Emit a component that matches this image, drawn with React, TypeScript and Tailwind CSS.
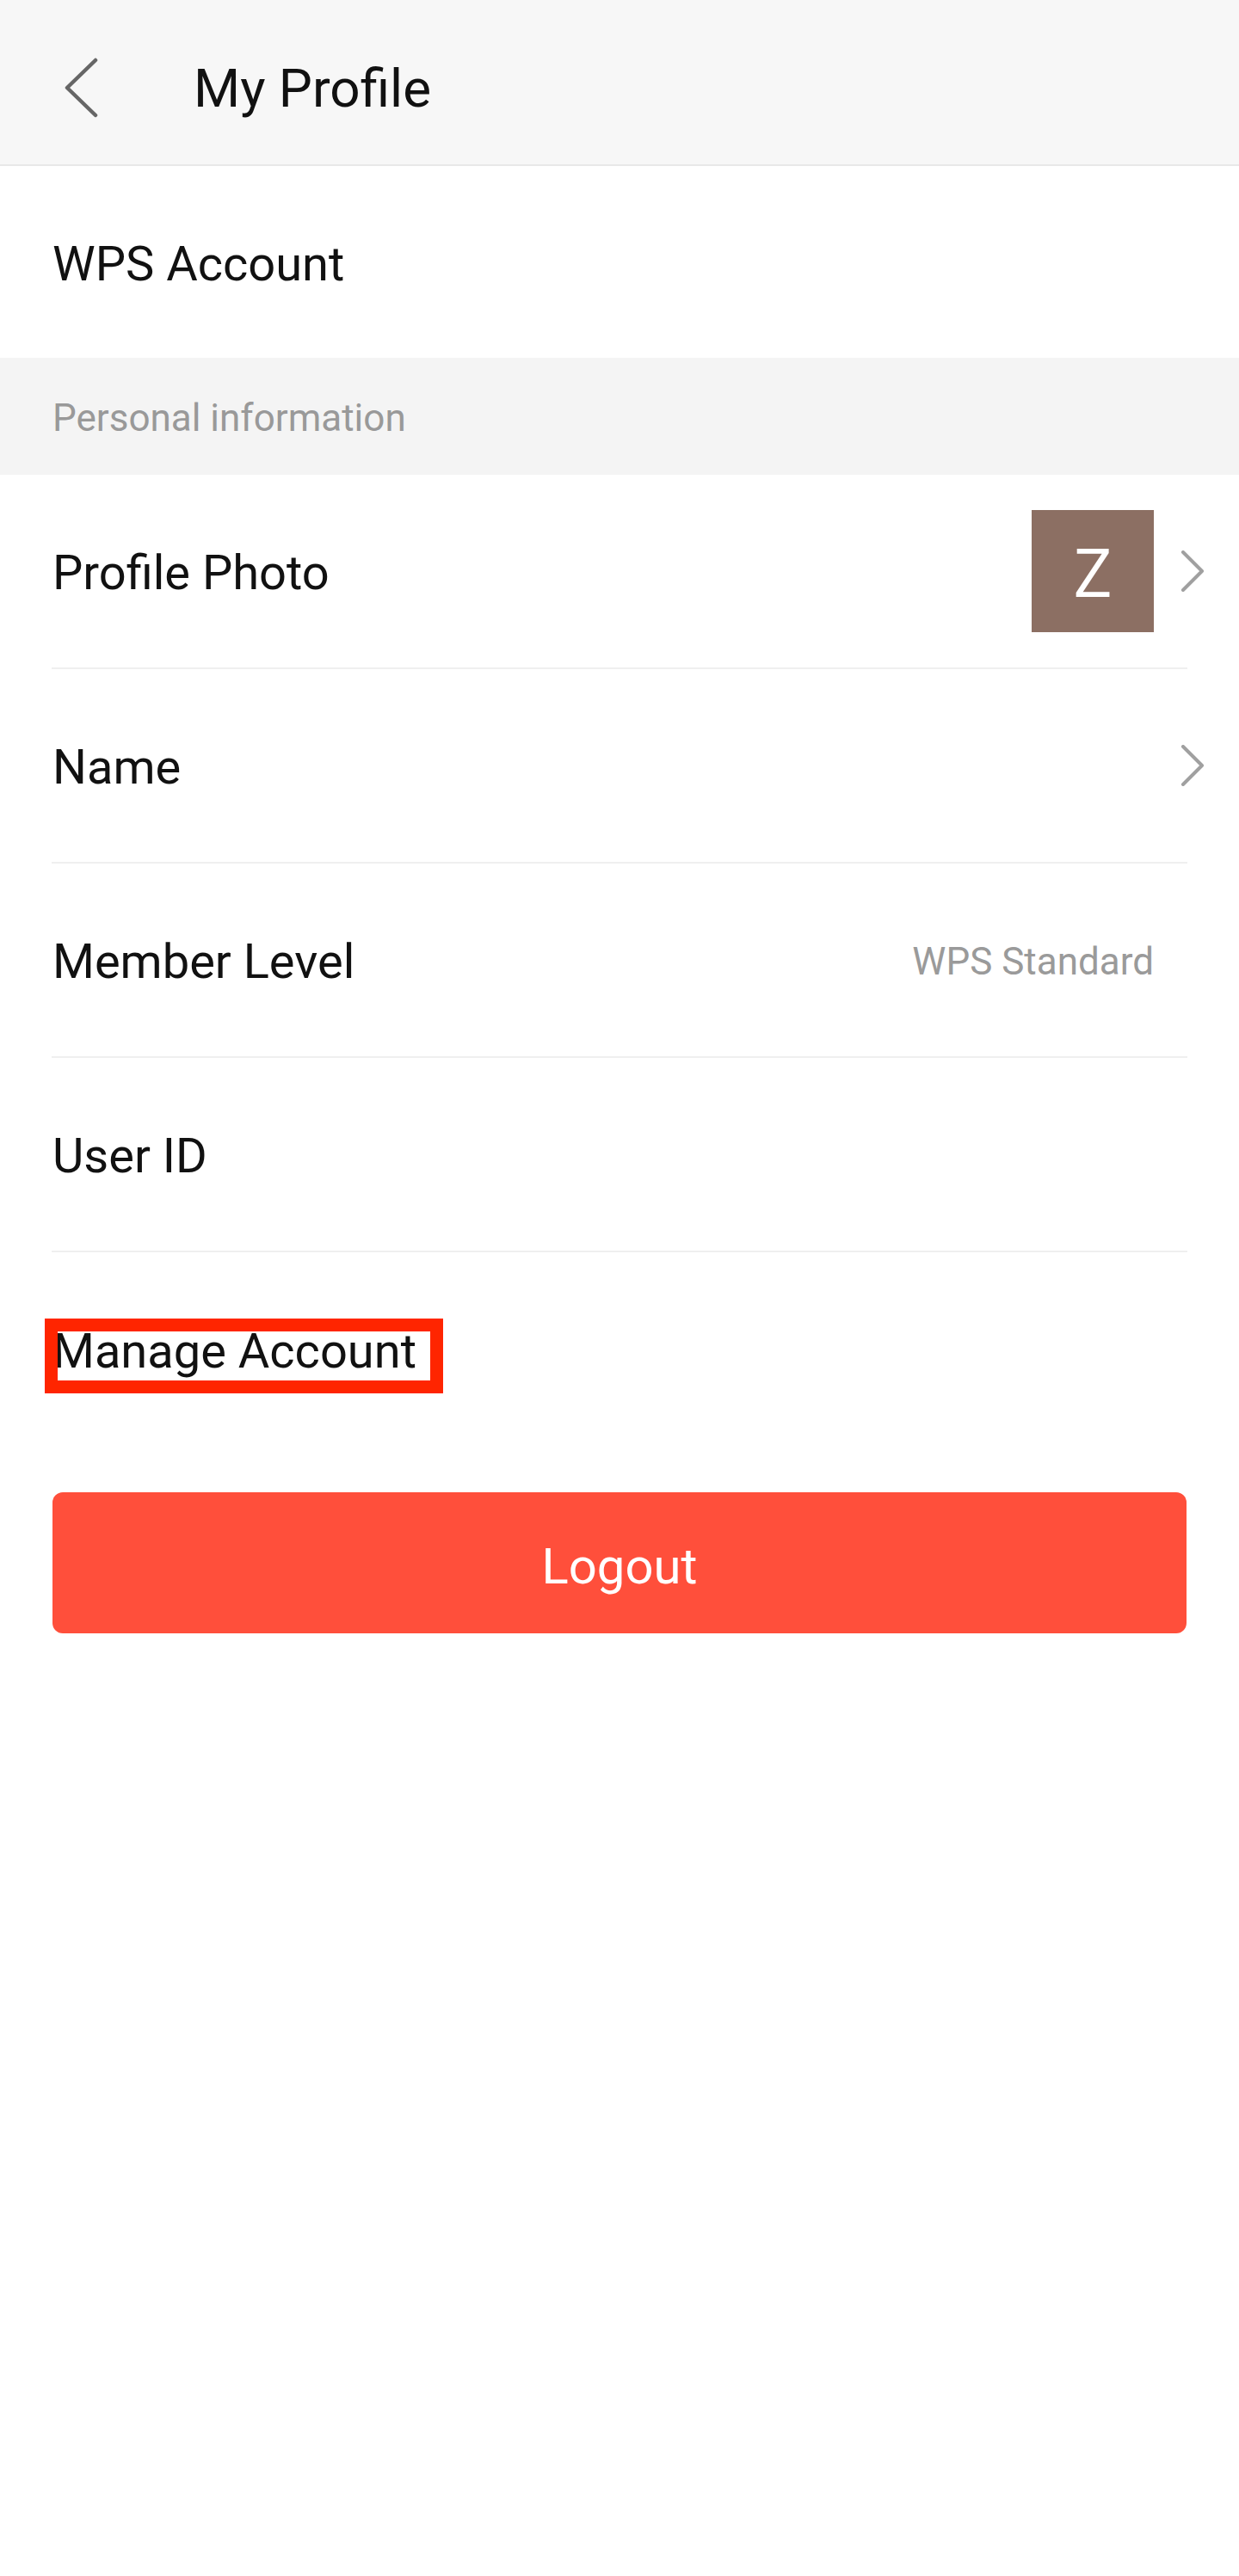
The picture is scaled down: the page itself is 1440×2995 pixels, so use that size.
import React from "react";

function Chevron() {
  return (
    <svg width="28" height="48" viewBox="0 0 28 48" fill="none" className="shrink-0">
      <path d="M3 2 L25 24 L3 46" stroke="#a0a0a0" strokeWidth="4" strokeLinecap="round" strokeLinejoin="round" />
    </svg>
  );
}

function Row({ label, right, arrow }: { label: string; right?: React.ReactNode; arrow?: boolean }) {
  return (
    <>
      <div className="flex items-center h-[224px] pl-[61px] pr-[40px]">
        <span className="text-[56px] text-[#111] pt-[4px]">{label}</span>
        <div className="ml-auto flex items-center">
          {right}
          <div className="w-[28px] ml-[31px] flex items-center">{arrow && <Chevron />}</div>
        </div>
      </div>
      <div className="h-[2px] mx-[60px] bg-[#efefef]" />
    </>
  );
}

export default function App() {
  return (
    <div className="w-[1440px] min-h-[2995px] bg-white font-['Roboto','Liberation_Sans',sans-serif]">
      {/* Header */}
      <header className="h-[193px] bg-[#f7f7f7] border-b-2 border-[#e8e8e8] flex items-center">
        <svg width="40" height="70" viewBox="0 0 40 70" fill="none" className="ml-[74px] mt-[12px]">
          <path d="M37 3 L4 35 L37 67" stroke="#666" strokeWidth="4.5" strokeLinecap="round" strokeLinejoin="round" />
        </svg>
        <h1 className="ml-[111px] mt-[14px] text-[62px] text-[#111]">My Profile</h1>
      </header>

      <div className="h-[223px] flex items-center pl-[61px]">
        <span className="text-[56px] text-[#111] pt-[4px]">WPS Account</span>
      </div>

      <div className="h-[136px] bg-[#f4f4f4] flex items-center pl-[61px]">
        <span className="text-[44px] text-[#999] pt-[4px]">Personal information</span>
      </div>

      <Row
        label="Profile Photo"
        arrow
        right={
          <div className="w-[142px] h-[142px] bg-[#8c6f63] flex items-center justify-center">
            <span className="text-[78px] leading-none text-white font-['Open_Sans',sans-serif]">Z</span>
          </div>
        }
      />
      <Row label="Name" arrow />
      <Row label="Member Level" right={<span className="text-[44px] text-[#9a9a9a] pt-[4px]">WPS Standard</span>} />
      <Row label="User ID" />

      {/* Manage account, with the red highlight box */}
      <div className="h-[229px] flex items-center pl-[61px]">
        <span className="relative text-[56px] leading-none text-[#111]">
          Manage Account
          <span className="absolute top-[-10px] bottom-[-21px] left-[-9px] right-[-31px] border-[15px] border-[#ff2500]" />
        </span>
      </div>

      <div className="mt-[50px] mx-[61px] h-[164px] rounded-[12px] bg-[#ff4f3b] flex items-center justify-center">
        <span className="text-[58px] text-white pt-[8px]">Logout</span>
      </div>
    </div>
  );
}
